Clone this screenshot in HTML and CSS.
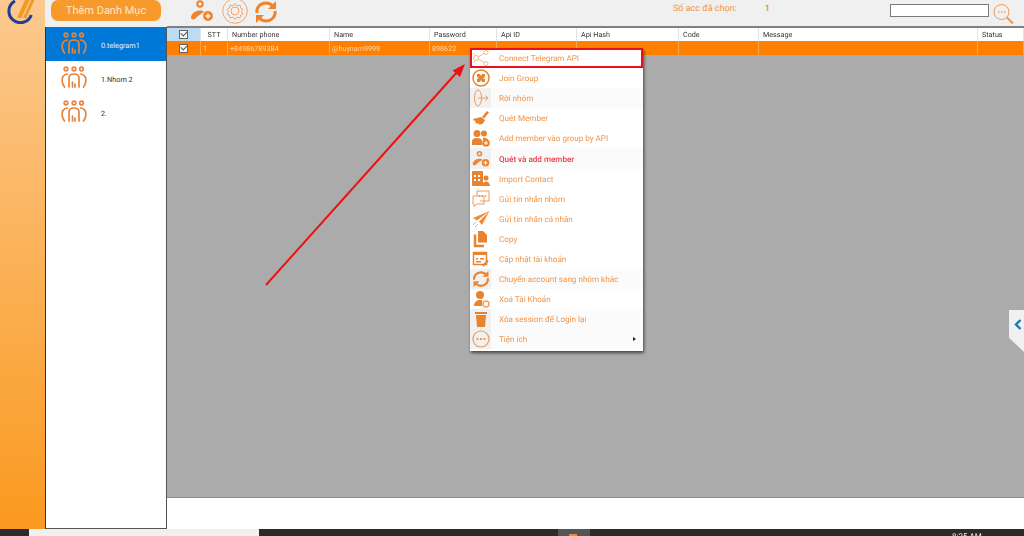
FILE: index.html
```html
<!DOCTYPE html>
<html>
	<head>
		<meta charset="utf-8" />
		<title>Telegram</title>
		<link rel="stylesheet" href="styles.css">
	</head>
	<body>
		<svg class="defs" width="0" height="0">
			<symbol id="i-group" viewBox="0 0 26 24">
				<g fill="none" stroke="#e8833a" stroke-width="1.700" stroke-linecap="round">
					<circle cx="5" cy="3" r="1.800"/><circle cx="13" cy="3" r="1.800"/><circle cx="20.500" cy="3" r="1.800"/>
					<path d="M3.500 21C1 18 .5 13 2 10.500 3 9 5 8 6.500 8"/>
					<path d="M22.500 21C25 18 25.500 13 24 10.500 23 9 21 8 19.500 8"/>
					<path d="M8 21V12C8 9.500 10 8 13 8S18 9.500 18 12V21"/>
					<path d="M11.500 16V21M14 18V21"/>
				</g>
			</symbol>
			<symbol id="i-adduser" viewBox="0 0 24 22">
				<circle cx="10" cy="4" r="2.700" fill="none" stroke="#f0842c" stroke-width="2"/>
				<path d="M1 18C1 14 4 11 10 10.500 12 10.500 13 11 14 12 11 14 7 16 5 19 3 20 1 19 1 18Z" fill="#f0842c"/>
				<circle cx="18" cy="16" r="5" fill="#f0842c"/>
				<path d="M15.500 16H20.500M18 13.500V18.500" stroke="#fff" stroke-width="1.500"/>
			</symbol>
			<symbol id="i-refresh" viewBox="0 0 24 24">
				<g fill="none" stroke="#f0842c" stroke-width="3">
					<path d="M3 13C2 8 6 3 12 3 15 3 17.500 4.500 19 6.500"/>
					<path d="M21 11C22 16 18 21 12 21 9 21 6.500 19.500 5 17.500"/>
				</g>
				<path d="M22 1V9H14Z M2 23V15H10Z" fill="#f0842c"/>
			</symbol>
		</svg>

		<div class="app">
			<div class="rail">
				<svg class="logo" width="28" height="24" viewBox="0 0 28 24">
					<path d="M8 1A11.500 11.500 0 1 0 24.300 14.900" fill="none" stroke="#1f3f96" stroke-width="3"/>
					<path d="M10 18L18 0H22.500L14.500 18Z" fill="#f39a1f"/>
					<path d="M16 18L24 0H27.500L19.500 18Z" fill="#e8a02c"/>
				</svg>
			</div>
			<div class="main">
				<div class="topbar">
					<div class="btn-add">Thêm Danh Mục</div>
					<svg class="tool-user" width="24" height="22"><use href="#i-adduser"/></svg>
					<svg class="tool-gear" width="26" height="24" viewBox="0 0 26 24">
						<g fill="none" stroke="#f2a56a" stroke-width="1">
							<circle cx="13" cy="11" r="12.300"/>
							<path d="M13 3.500L15 6 18 5 18.700 8 21 9.500 19.500 11.500 21 14 18.700 15 18 18 15 17 13 19.500 11 17 8 18 7.300 15 5 14 6.500 11.500 5 9.500 7.300 8 8 5 11 6Z"/>
							<circle cx="13" cy="11" r="4"/>
						</g>
					</svg>
					<svg class="tool-refresh" width="26" height="24"><use href="#i-refresh"/></svg>
					<div class="picked">
						<span class="picked-label">Số acc đã chọn:</span>
						<span class="picked-num">1</span>
					</div>
					<div class="search-box"></div>
					<svg class="search-icon" width="21" height="20" viewBox="0 0 21 20">
						<g fill="none" stroke="#ee9a52">
							<circle cx="8.500" cy="8" r="7.500"/>
							<path d="M14 13.500L20 19.500" stroke-width="2"/>
						</g>
						<path d="M5 8h1.400M8 8h1.400M11 8h1.400" stroke="#ee9a52" stroke-width="1.400"/>
					</svg>
				</div>
				<div class="content">
					<ul class="groups">
						<li class="group active"><svg width="26" height="24"><use href="#i-group"/></svg><span>0.telegram1</span></li>
						<li class="group"><svg width="26" height="24"><use href="#i-group"/></svg><span>1.Nhom 2</span></li>
						<li class="group"><svg width="26" height="24"><use href="#i-group"/></svg><span>2.</span></li>
					</ul>
					<div class="work">
						<div class="grid">
							<div class="row head">
								<div class="cell check on"><i class="box"></i></div>
								<div class="cell center">STT</div>
								<div class="cell">Number phone</div>
								<div class="cell">Name</div>
								<div class="cell">Password</div>
								<div class="cell">Api ID</div>
								<div class="cell">Api Hash</div>
								<div class="cell">Code</div>
								<div class="cell">Message</div>
								<div class="cell">Status</div>
							</div>
							<div class="row data">
								<div class="cell check"><i class="box"></i></div>
								<div class="cell">1</div>
								<div class="cell">+84986789384</div>
								<div class="cell">@huynam9999</div>
								<div class="cell">898622</div>
								<div class="cell"></div>
								<div class="cell"></div>
								<div class="cell"></div>
								<div class="cell"></div>
								<div class="cell"></div>
							</div>
						</div>
						<div class="footer"></div>
					</div>
				</div>
			</div>
		</div>
		<div class="taskbar">
			<div class="task-search"></div>
			<div class="task-app"><i></i></div>
			<div class="task-time">8:25 AM</div>
		</div>

		<!-- context menu -->
		<ul class="menu">
			<li class="item hot">
				<svg width="18" height="18" viewBox="0 0 18 18"><g fill="none" stroke="#f3b98a"><circle cx="14" cy="3.500" r="2"/><circle cx="14" cy="14.500" r="2"/><circle cx="4" cy="9" r="2.500"/><path d="M6 8L12 4.500M6 10L12 13.500M1 4L3 6M1 14L3 12"/></g></svg>
				<span>Connect Telegram API</span>
			</li>
			<li class="item">
				<svg width="18" height="18" viewBox="0 0 18 18"><circle cx="9" cy="9" r="8" fill="none" stroke="#e8842f" stroke-width="1.500"/><path d="M5 5H8L9 7 10 5H13V8L11 9 13 10V13H10L9 11 8 13H5V10L7 9 5 8Z" fill="#e8842f"/></svg>
				<span>Join Group</span>
			</li>
			<li class="item shade">
				<svg width="18" height="18" viewBox="0 0 18 18"><g fill="none" stroke="#ee9a5c"><ellipse cx="6" cy="9" rx="3.500" ry="8"/><path d="M6 9H16M13.500 6.500L16 9 13.500 11.500"/></g></svg>
				<span>Rời nhóm</span>
			</li>
			<li class="item">
				<svg width="18" height="18" viewBox="0 0 18 18"><path d="M10 8L15 2 17 3.500 12 9.500ZM1 10L9 8 13 11C12 14 10 16 7 15.500L6 14 5 15 3 13 4 12 1.500 11.500Z" fill="#e8842f"/></svg>
				<span>Quét Member</span>
			</li>
			<li class="item">
				<svg width="18" height="18" viewBox="0 0 18 18"><g fill="#e8842f"><circle cx="5" cy="4.500" r="3.500"/><circle cx="12" cy="4.500" r="3"/><path d="M0 16V12C0 10 2 9 5 9S10 10 10 12V16Z"/><path d="M11 8.500C13.500 8.500 16 9.500 16 11H11Z"/><circle cx="14" cy="14" r="3.800"/></g><path d="M12 14H16M14 12V16" stroke="#fff"/></svg>
				<span>Add member vào group by API</span>
			</li>
			<li class="item shade">
				<svg width="18" height="18"><use href="#i-adduser"/></svg>
				<span class="alert">Quét và add member</span>
			</li>
			<li class="item">
				<svg width="18" height="18" viewBox="0 0 18 18"><rect x="0" y="1" width="11" height="15" rx="1" fill="#e8842f"/><path d="M2 5h2v2H2zM6 5h2v2H6zM2 9h2v2H2zM6 9h2v2H6z" fill="#fff"/><circle cx="14" cy="8" r="2.500" fill="#e8842f"/><path d="M10 16C10 13 12 11.500 14 11.500S18 13 18 16Z" fill="#e8842f"/></svg>
				<span>Import Contact</span>
			</li>
			<li class="item">
				<svg width="18" height="18" viewBox="0 0 18 18"><g fill="none" stroke="#ee9a5c"><path d="M5 1H17V11H8M5 1V6"/><path d="M1 6H12V14H5L2 16.500V14H1Z"/></g><path d="M7 6h1.200M10 6h1.200M13 6h1.200" stroke="#e8842f" stroke-width="1.300"/></svg>
				<span>Gửi tin nhắn nhóm</span>
			</li>
			<li class="item">
				<svg width="18" height="18" viewBox="0 0 18 18"><path d="M17.500 1L1 8 5 10.500ZM17.500 1L7 11.500 10 15Z" fill="#ee8c3c"/><path d="M1 15L4 12M3 17L6 14" stroke="#f2b07c"/></svg>
				<span>Gửi tin nhắn cá nhân</span>
			</li>
			<li class="item">
				<svg width="18" height="18" viewBox="0 0 18 18"><path d="M6 1H11L15 5V12.500H6Z" fill="#e8842f"/><path d="M3 4.500V16H12" fill="none" stroke="#e8842f" stroke-width="2.500"/></svg>
				<span>Copy</span>
			</li>
			<li class="item">
				<svg width="18" height="18" viewBox="0 0 18 18"><rect x="1.500" y="2.500" width="13" height="12" fill="none" stroke="#e8842f" stroke-width="1.500"/><path d="M1 2H15V5H1Z" fill="#e8842f"/><path d="M4 8h2v1.500H4zM8 8h4v1.500H8zM4 11h5v1.500H4z" fill="#e8842f"/><path d="M11 16L16 10.500" stroke="#e8842f" stroke-width="2"/></svg>
				<span>Cập nhật tài khoản</span>
			</li>
			<li class="item shade">
				<svg width="18" height="18"><use href="#i-refresh"/></svg>
				<span>Chuyển account sang nhóm khác</span>
			</li>
			<li class="item">
				<svg width="18" height="18" viewBox="0 0 18 18"><circle cx="8" cy="5" r="4" fill="#e8842f"/><path d="M2 16C2 12 5 11 6 10H10C10.500 11 10 12 10 14V16Z" fill="#e8842f"/><circle cx="14" cy="14" r="3" fill="none" stroke="#eda36a" stroke-width="1.500"/></svg>
				<span>Xoá Tài Khoản</span>
			</li>
			<li class="item shade">
				<svg width="18" height="18" viewBox="0 0 18 18"><path d="M3 2H15V4H3ZM4 5H14L13 17H5Z" fill="#e8842f"/></svg>
				<span>Xóa session để Login lại</span>
			</li>
			<li class="item shade">
				<svg width="18" height="18" viewBox="0 0 18 18"><circle cx="9" cy="9" r="8" fill="none" stroke="#ee9a5c" stroke-width="1.200"/><path d="M4.500 9h2M8 9h2M11.500 9h2" stroke="#ee9a5c" stroke-width="2"/></svg>
				<span>Tiện ích</span>
				<b class="more"></b>
			</li>
		</ul>

		<svg class="pointer" width="220" height="250" viewBox="0 0 220 250">
			<path d="M1 240L193 26" stroke="#ee1111" stroke-width="2" fill="none"/>
			<path d="M200 19L195 32 187.600 25.400Z" fill="#ee1111"/>
		</svg>

		<div class="side-tab">
			<svg width="8" height="11" viewBox="0 0 8 11"><path d="M6.500 1L2 5.500 6.500 10" fill="none" stroke="#1a7ab5" stroke-width="2.400"/></svg>
		</div>
	</body>
</html>
```

FILE: styles.css
```css
*{
	padding: 0;
	margin: 0;
	box-sizing: border-box;
}
html,body{
	width: 100%;
	height: 100%;
	overflow: hidden;
}
body{
	display: flex;
	flex-direction: column;
	font-family: Roboto,"Liberation Sans",sans-serif;
	font-size: 8px;
	text-rendering: geometricPrecision;
	color: #333;
	background: #f0f0f0;
	filter: blur(0.35px);
}
li{
	list-style: none;
}
.defs{
	position: absolute;
}
.app{
	flex: 1;
	min-height: 0;
	display: flex;
}

/* left strip */
.rail{
	width: 45px;
	flex: none;
	padding-left: 7px;
	background: linear-gradient(#fcc98f,#fa991f);
}
.logo{
	display: block;
}
.main{
	flex: 1;
	min-width: 0;
	display: flex;
	flex-direction: column;
}

/* top bar */
.topbar{
	height: 27px;
	flex: none;
	display: flex;
	align-items: flex-start;
	padding-left: 6px;
	background: #f0f0f0;
}
.btn-add{
	width: 110px;
	height: 21px;
	line-height: 21px;
	border-radius: 7px;
	background: #f89a2b;
	color: #fde6cc;
	font-size: 11px;
	text-align: center;
}
.tool-user{
	margin-left: 29px;
}
.tool-gear{
	margin-left: 8px;
}
.tool-refresh{
	margin-left: 5px;
}
.picked{
	width: 217px;
	margin-left: 394px;
	display: flex;
	gap: 28px;
	padding-top: 3px;
	color: #f0954a;
	font-size: 9px;
	line-height: 12px;
}
.picked-num{
	font-weight: bold;
}
.search-box{
	width: 99px;
	height: 13px;
	margin-top: 4px;
	border: 1px solid #7a7a7a;
	background: #fff;
}
.search-icon{
	margin: 4px 0 0 4px;
}
.content{
	flex: 1;
	min-height: 0;
	display: flex;
}

/* group list */
.groups{
	width: 122px;
	flex: none;
	background: #fff;
	border-left: 1px solid #333;
	border-right: 1px solid #555;
	border-bottom: 1px solid #555;
}
.group{
	height: 34px;
	display: flex;
	align-items: center;
	gap: 14px;
	padding-left: 15px;
	font-size: 7.300px;
	color: #333;
}
.group span{
	padding-top: 2px;
}
.group.active{
	background: #0078d7;
	color: #e6f2fb;
}
.group svg{
	flex: none;
}

/* table */
.work{
	flex: 1;
	min-width: 0;
	display: flex;
	flex-direction: column;
}
.grid{
	flex: 1;
	background: #ababab;
	border-top: 2px solid #808080;
	border-bottom: 1px solid #8f8f8f;
	margin-top: -1px;
	font-size: 7.200px;
}
.row{
	display: grid;
	grid-template-columns: 34px 27px 102px 100px 67px 80px 102px 80px 219px 46px;
	height: 14px;
	line-height: 14px;
}
.row.head{
	height: 13px;
	background: #fff;
}
.row.data{
	line-height: 15px;
	background: #ff8000;
	color: #fbd9ae;
}
.cell{
	padding-left: 4px;
	border-right: 1px solid #e3e3e3;
	overflow: hidden;
	white-space: nowrap;
}
.row.data .cell{
	padding-left: 2px;
	border-right-color: #ffa64d;
}
.cell.center{
	padding-left: 0;
	text-align: center;
}
.check,.row.data .check{
	display: flex;
	align-items: center;
	justify-content: center;
	padding-left: 0;
}
.check.on{
	background: #bcdcf4;
}
.box{
	position: relative;
	width: 9px;
	height: 9px;
	border: 1px solid #666;
	background: #f8f8f8;
}
.box:after{
	content: "";
	position: absolute;
	left: 1px;
	top: 0;
	width: 5px;
	height: 3px;
	border-left: 1px solid #555;
	border-bottom: 1px solid #555;
	transform: rotate(-45deg);
}
.footer{
	height: 31px;
	flex: none;
	background: #fff;
}

/* taskbar */
.taskbar{
	height: 7px;
	flex: none;
	display: flex;
	padding-left: 29px;
	overflow: hidden;
	background: #2b2b2b;
}
.task-search{
	width: 230px;
	background: #f0f0f0;
}
.task-app{
	width: 32px;
	margin-left: 299px;
	padding: 5px 0 0 11px;
	background: #555;
}
.task-app i{
	display: block;
	width: 8px;
	height: 2px;
	background: #f08a2c;
}
.task-time{
	margin-left: 362px;
	padding-top: 2px;
	color: #eee;
	font-size: 8px;
	line-height: 11px;
}

/* overlays */
.menu{
	position: absolute;
	left: 470px;
	top: 48px;
	width: 173px;
	height: 303px;
	background: #fff;
	box-shadow: 1px 2px 3px rgba(0,0,0,0.6);
}
.item{
	position: relative;
	height: 20.100px;
	display: flex;
	align-items: center;
	gap: 9px;
	padding-left: 2px;
	color: #f0954a;
	font-size: 8.100px;
}
.item svg{
	flex: none;
}
.item.shade{
	background: linear-gradient(90deg,#f1f1f1 21px,#fbfbfb 21px);
}
.item.hot{
	outline: 2px solid #e8101c;
	outline-offset: -2px;
}
.alert{
	color: #ee3a48;
	font-weight: 500;
}
.more{
	position: absolute;
	right: 7px;
	top: 8px;
	border-left: 3px solid #222;
	border-top: 2.500px solid transparent;
	border-bottom: 2.500px solid transparent;
}
.pointer{
	position: absolute;
	left: 265px;
	top: 45px;
}
.side-tab{
	position: absolute;
	right: 0;
	top: 310px;
	width: 15px;
	height: 42px;
	padding: 9px 0 0 5px;
	background: #f0f0f0;
	clip-path: polygon(0 0,100% 0,100% 100%,0 66%);
}
```
